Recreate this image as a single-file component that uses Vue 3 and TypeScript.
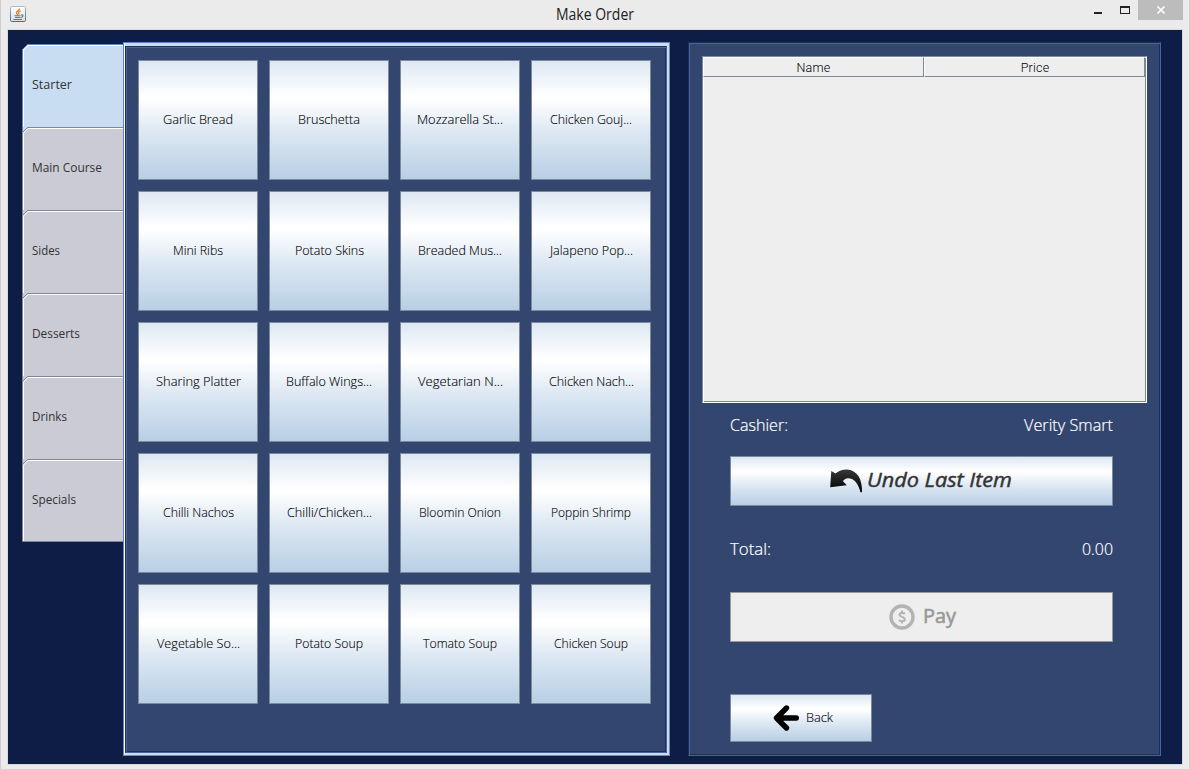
<script setup lang="ts">
interface Item { label: string; w: number }
const tabs: Item[] = [
  { label: 'Starter', w: 40 },
  { label: 'Main Course', w: 70 },
  { label: 'Sides', w: 28 },
  { label: 'Desserts', w: 48 },
  { label: 'Drinks', w: 35 },
  { label: 'Specials', w: 44 },
]
const dishes: Item[] = [
  { label: 'Garlic Bread', w: 70 },
  { label: 'Bruschetta', w: 62 },
  { label: 'Mozzarella St...', w: 86 },
  { label: 'Chicken Gouj...', w: 82 },
  { label: 'Mini Ribs', w: 50 },
  { label: 'Potato Skins', w: 69 },
  { label: 'Breaded Mus...', w: 84 },
  { label: 'Jalapeno Pop...', w: 83 },
  { label: 'Sharing Platter', w: 85 },
  { label: 'Buffalo Wings...', w: 86 },
  { label: 'Vegetarian N...', w: 85 },
  { label: 'Chicken Nach...', w: 85 },
  { label: 'Chilli Nachos', w: 71 },
  { label: 'Chilli/Chicken...', w: 85 },
  { label: 'Bloomin Onion', w: 82 },
  { label: 'Poppin Shrimp', w: 80 },
  { label: 'Vegetable So...', w: 83 },
  { label: 'Potato Soup', w: 68 },
  { label: 'Tomato Soup', w: 74 },
  { label: 'Chicken Soup', w: 74 },
]
</script>

<template>
  <div class="window">
    <header class="titlebar">
      <svg class="java" width="16" height="16" viewBox="0 0 16 16">
        <defs>
          <linearGradient id="jb" x1="0" y1="0" x2="0" y2="1">
            <stop offset="0" stop-color="#a9b9c6" /><stop offset="1" stop-color="#4d6b83" />
          </linearGradient>
          <linearGradient id="jf" x1="0" y1="0" x2="0" y2="1">
            <stop offset="0" stop-color="#ffffff" /><stop offset="1" stop-color="#d9dee2" />
          </linearGradient>
        </defs>
        <rect x="0.5" y="0.5" width="15" height="15" rx="1.2" fill="url(#jf)" stroke="url(#jb)" />
        <path d="M9.500 2.500C9.800 4.500 6 5 6.500 7C6.700 8 7.500 8.300 7.800 9M10.500 4.800C8.500 5.500 8.200 6.500 9 8.500" fill="none" stroke="#ec7f24" stroke-width="1.300" />
        <path d="M4.500 9.700H10.500M5 11.500H10.500M3.500 13.500H12M11 9C14 8.200 13.500 11 11 11.500" fill="none" stroke="#557a99" stroke-width="1.100" />
      </svg>
      <svg class="title" width="84" height="28"><text x="0" y="20" textLength="78" lengthAdjust="spacingAndGlyphs">Make Order</text></svg>
      <div class="controls">
        <i class="min"></i>
        <i class="max"></i>
        <span class="close">
          <svg width="8" height="8" viewBox="0 0 8 8"><path d="M.5 .5L7.500 7.500M7.500 .5L.5 7.500" stroke="#fff" stroke-width="1.700" /></svg>
        </span>
      </div>
    </header>

    <main class="content">
      <nav class="tabs">
        <div v-for="(t, i) in tabs" :key="t.label" class="tab" :class="{ on: i === 0, after: i === 1 }">
          <svg class="shape" width="102" height="83" viewBox="0 0 102 83">
            <path v-if="i > 0" class="corner" d="M0 0H6L0 6Z" />
            <path class="fill" :d="i === 5 ? 'M0 6L6 0H102V82H0Z' : 'M0 6L6 0H102V83H0Z'" />
            <path class="hi" :d="i === 5 ? 'M1.500 82V6L6 1.500H102' : 'M1.500 83V6L6 1.500H102'" />
            <path class="edge" :d="i === 5 ? 'M102 82.500H.5V5.500L5.500 .5H102' : 'M.5 83V5.500L5.500 .5H102'" />
            <path v-if="i > 0" class="side" d="M.5 0V5" />
          </svg>
          <svg class="label" width="90" height="20"><text x="0" y="14" :textLength="t.w" lengthAdjust="spacingAndGlyphs">{{ t.label }}</text></svg>
        </div>
      </nav>

      <section class="pane">
        <div class="grid">
          <button v-for="d in dishes" :key="d.label" class="dish">
            <svg :width="d.w + 6" height="20"><text x="3" y="14" :textLength="d.w" lengthAdjust="spacingAndGlyphs">{{ d.label }}</text></svg>
          </button>
        </div>
      </section>

      <aside class="order">
        <div class="table">
          <div class="thead"><span class="th name">Name</span><span class="th price">Price</span></div>
          <div class="tbody"></div>
        </div>
        <div class="line cashier">
          <svg width="62" height="24"><text x="0" y="17" textLength="58" lengthAdjust="spacingAndGlyphs">Cashier:</text></svg>
          <svg width="93" height="24"><text x="3" y="17" textLength="89" lengthAdjust="spacingAndGlyphs">Verity Smart</text></svg>
        </div>
        <button class="undo">
          <svg width="33" height="24" viewBox="0 0 33 24">
            <defs><linearGradient id="ug" x1="0" y1="0" x2="0" y2="1"><stop offset="0" stop-color="#383838" /><stop offset="1" stop-color="#000" /></linearGradient></defs>
            <path d="M1.300 2L5.500 4.600C9 1.500 12.500 .4 17 .5C27 1 32.500 10 32 23.300H30.500C28.500 15 24.500 9.200 18 9.200C15.500 9.300 14 10.500 13 12.300L16.800 16.300L.2 18.300Z" fill="url(#ug)" />
          </svg>
          <svg class="undo-text" width="150" height="30"><text x="0" y="21" textLength="145" lengthAdjust="spacingAndGlyphs">Undo Last Item</text></svg>
        </button>
        <div class="line total">
          <svg width="45" height="24"><text x="0" y="17" textLength="41" lengthAdjust="spacingAndGlyphs">Total:</text></svg>
          <svg width="35" height="24"><text x="3" y="17" textLength="31" lengthAdjust="spacingAndGlyphs">0.00</text></svg>
        </div>
        <button class="pay" disabled>
          <svg width="26" height="26" viewBox="0 0 26 26">
            <circle cx="13" cy="13" r="11" fill="none" stroke="#b3b3b3" stroke-width="3.400" />
            <path d="M16 9.800C15.200 8.700 10.500 8.200 10.500 10.700C10.500 13.200 15.800 12.500 15.800 15.300C15.800 18 11 17.500 9.900 16.200M13 6.500V9M13 17V19.500" fill="none" stroke="#b3b3b3" stroke-width="2" />
          </svg>
          <svg class="pay-text" width="36" height="30"><text x="0" y="21" textLength="33" lengthAdjust="spacingAndGlyphs">Pay</text></svg>
        </button>
        <button class="back">
          <svg width="26" height="26" viewBox="0 0 26 26"><path d="M13.500 3L3.500 13L13.500 23M4 13H23.300" fill="none" stroke="#000" stroke-width="5.400" stroke-linejoin="round" stroke-linecap="round" /></svg>
          <svg class="back-text" width="30" height="20"><text x="0" y="14" textLength="27" lengthAdjust="spacingAndGlyphs">Back</text></svg>
        </button>
      </aside>
    </main>
  </div>
</template>

<style>
body { margin: 0; overflow: hidden; }
</style>
<style scoped>
* { box-sizing: border-box; }
.window {
  width: 1190px; height: 769px; background: #ebebeb; padding: 0 8px 5px;
  box-shadow: inset 1px 0 #cdcdcd, inset -1px 0 #cdcdcd;
  font-family: "Open Sans", "Noto Sans", sans-serif; font-size: 13.5px; font-weight: 400; color: #333;
}
svg { display: block; flex: none; overflow: visible; }
text { fill: #333; }
.titlebar { height: 30px; position: relative; }
.java { position: absolute; left: 2px; top: 6px; }
.title { position: absolute; left: 548px; top: 0; font-size: 15.5px; }
.title text { fill: #222; }
.controls { position: absolute; right: -1px; top: 0; height: 20px; display: flex; align-items: flex-start; }
.min { width: 8px; height: 2px; background: #222; margin: 12px 18px 0 0; }
.max { width: 10px; height: 8px; border: 1px solid #222; border-top-width: 2px; margin: 6px 8px 0 0; }
.close { width: 45px; height: 20px; background: #bcbcbc; display: flex; align-items: center; justify-content: center; }
.content {
  width: 1174px; height: 734px; background: #0e1d46; display: flex; padding: 12px 21px 8px 14px;
  box-shadow: 0 0 0 1px #dadada;
}
.tabs { width: 101px; padding-top: 2px; display: flex; flex-direction: column; }
.tab { height: 83px; position: relative; }
.tab .shape { position: absolute; left: 0; top: 0; }
.fill, .corner { fill: #cbcbd5; }
.after .corner { fill: #c8ddf2; }
.hi { fill: none; stroke: #fff; }
.edge, .side { fill: none; stroke: #7a8a99; }
.on .fill { fill: #c8ddf2; }
.on .edge, .after .side { stroke: #6382bf; }
.tab .label { position: absolute; left: 10px; top: 31px; }
.pane {
  width: 547px; height: 714px; position: relative; z-index: 1;
  background: #c8ddf2; border: 1px solid #6382bf; border-right-color: #7a8a99; border-bottom-color: #7a8a99;
  padding: 3px 2px 2px 1px; box-shadow: inset 1px 0 #fff;
}
.grid {
  width: 542px; height: 707px; background: #33466f;
  border: 1px solid #1f2e54; border-right-color: #4664a5; border-bottom-color: #4664a5;
  box-shadow: inset 1px 1px #4664a5, inset -1px -1px #1f2e54;
  padding: 13px 12px; display: grid; grid-template-columns: repeat(4, 120px); grid-auto-rows: 120px; gap: 11px;
}
button {
  margin: 0; padding: 0; border: 1px solid #7a8a99; border-radius: 0; font: inherit;
  background: linear-gradient(#dde8f3 0%, #fff 30%, #fff 32%, #dde8f3 60%, #b8cfe5 100%);
  display: flex; align-items: center; justify-content: center;
}
.dish, .back { font-weight: 300; }
.dish text, .back text { fill: #000; stroke: #000; stroke-width: .12px; }
.order {
  margin-left: 18px; width: 473px; height: 714px; background: #33466f;
  border: 1px solid #1f2e54; border-right-color: #4664a5; border-bottom-color: #4664a5;
  box-shadow: inset 1px 1px #4664a5, inset -1px -1px #1f2e54;
  padding: 13px; display: flex; flex-direction: column;
}
.table { width: 445px; height: 347px; background: #eee; border: 1px solid #7a8a99; border-right-color: #fff; border-bottom-color: #fff; box-shadow: inset 1px 1px #fff, inset -1px -1px #7a8a99; }
.thead { display: flex; height: 20px; margin-right: 1px; font: 300 12.5px Roboto, sans-serif; color: #000; letter-spacing: .2px; }
.th { height: 20px; line-height: 20px; text-align: center; border: 1px solid #fff; border-right-color: #7a8a99; border-bottom-color: #7a8a99; }
.name { width: 221px; }
.price { width: 221px; padding-left: 1px; }
.line { display: flex; justify-content: space-between; margin: 0 33px 0 28px; font-size: 16px; font-weight: 300; height: 24px; }
.line text { fill: #fff; stroke: #fff; stroke-width: .2px; }
.cashier { margin-top: 11px; }
.undo { width: 383px; height: 50px; margin: 18px 0 0 28px; }
.undo svg:first-child { margin-left: 3px; }
.undo-text { font-size: 20px; font-style: italic; font-weight: 400; margin-left: 4px; }
.undo-text text { stroke: #333; stroke-width: .45px; }
.total { margin-top: 32px; }
.pay { width: 383px; height: 50px; margin: 30px 0 0 28px; background: #eee; border-color: #999; }
.pay svg:first-child { margin-left: 4px; }
.pay-text { font-size: 20px; font-weight: 400; margin-left: 8px; }
.pay-text text { fill: #999; stroke: #999; stroke-width: .6px; }
.back { width: 142px; height: 48px; margin: 52px 0 0 28px; }
.back svg:first-child { margin-left: 7px; }
.back-text { margin-left: 7px; }
</style>
